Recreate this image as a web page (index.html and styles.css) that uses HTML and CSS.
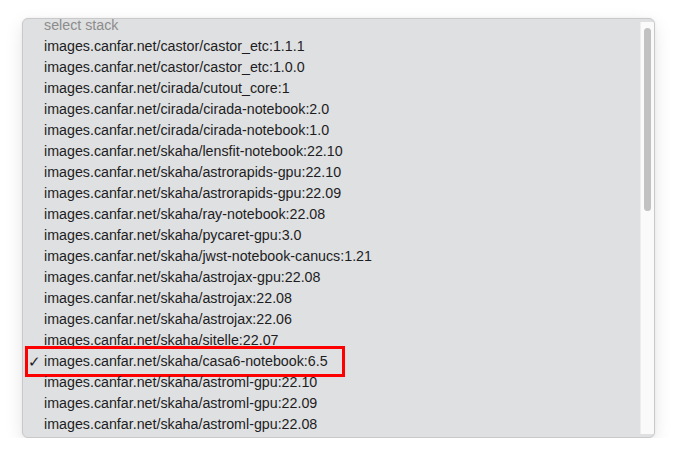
FILE: index.html
```html
<!DOCTYPE html>
<html>
<head>
<meta charset="utf-8">
<link rel="stylesheet" href="styles.css">
</head>
<body>
<div class="menu">
  <ul class="list">
    <li class="item placeholder">select stack</li>
    <li class="item">images.canfar.net/castor/castor_etc:1.1.1</li>
    <li class="item">images.canfar.net/castor/castor_etc:1.0.0</li>
    <li class="item">images.canfar.net/cirada/cutout_core:1</li>
    <li class="item">images.canfar.net/cirada/cirada-notebook:2.0</li>
    <li class="item">images.canfar.net/cirada/cirada-notebook:1.0</li>
    <li class="item">images.canfar.net/skaha/lensfit-notebook:22.10</li>
    <li class="item">images.canfar.net/skaha/astrorapids-gpu:22.10</li>
    <li class="item">images.canfar.net/skaha/astrorapids-gpu:22.09</li>
    <li class="item">images.canfar.net/skaha/ray-notebook:22.08</li>
    <li class="item">images.canfar.net/skaha/pycaret-gpu:3.0</li>
    <li class="item">images.canfar.net/skaha/jwst-notebook-canucs:1.21</li>
    <li class="item">images.canfar.net/skaha/astrojax-gpu:22.08</li>
    <li class="item">images.canfar.net/skaha/astrojax:22.08</li>
    <li class="item">images.canfar.net/skaha/astrojax:22.06</li>
    <li class="item">images.canfar.net/skaha/sitelle:22.07</li>
    <li class="item selected"><span class="check">✓</span>images.canfar.net/skaha/casa6-notebook:6.5<span class="highlight"></span></li>
    <li class="item">images.canfar.net/skaha/astroml-gpu:22.10</li>
    <li class="item">images.canfar.net/skaha/astroml-gpu:22.09</li>
    <li class="item">images.canfar.net/skaha/astroml-gpu:22.08</li>
  </ul>
  <div class="track"><div class="thumb"></div></div>
</div>
</body>
</html>
```

FILE: styles.css
```css
html, body {
  margin: 0;
  padding: 0;
  background: #ffffff;
}
body {
  padding: 18px 0 0 22px;
  font-family: "Liberation Sans", Arial, sans-serif;
}
.menu {
  width: 633px;
  height: 420px;
  box-sizing: border-box;
  background: #dfe0e1;
  border: 1px solid #c9c9c9;
  border-radius: 6px;
  box-shadow: 0 6px 18px rgba(0,0,0,0.10), 0 0 3px rgba(0,0,0,0.06);
  display: flex;
  overflow: hidden;
}
.list {
  list-style: none;
  margin: -4px 0 0 0;
  padding: 0;
  flex: 1;
  position: relative;
}
.item {
  position: relative;
  height: 21px;
  line-height: 21px;
  font-size: 14.25px;
  color: #1d1d1f;
  padding-left: 21px;
  white-space: nowrap;
}
.placeholder {
  color: #8c8c8c;
}
.check {
  position: absolute;
  left: 5px;
  top: 0;
  font-size: 15px;
}
.highlight {
  position: absolute;
  left: 2px;
  top: -5px;
  width: 320px;
  height: 31px;
  box-sizing: border-box;
  border: 3px solid #ff0000;
  pointer-events: none;
}
.track {
  width: 14px;
  margin: 3px 0 3px 0;
  background: #fafafa;
  border-left: 1px solid #ededed;
  display: flex;
  justify-content: center;
  padding-top: 6px;
  box-sizing: border-box;
}
.thumb {
  width: 7px;
  height: 183px;
  border-radius: 4px;
  background: #c1c1c1;
}
```
